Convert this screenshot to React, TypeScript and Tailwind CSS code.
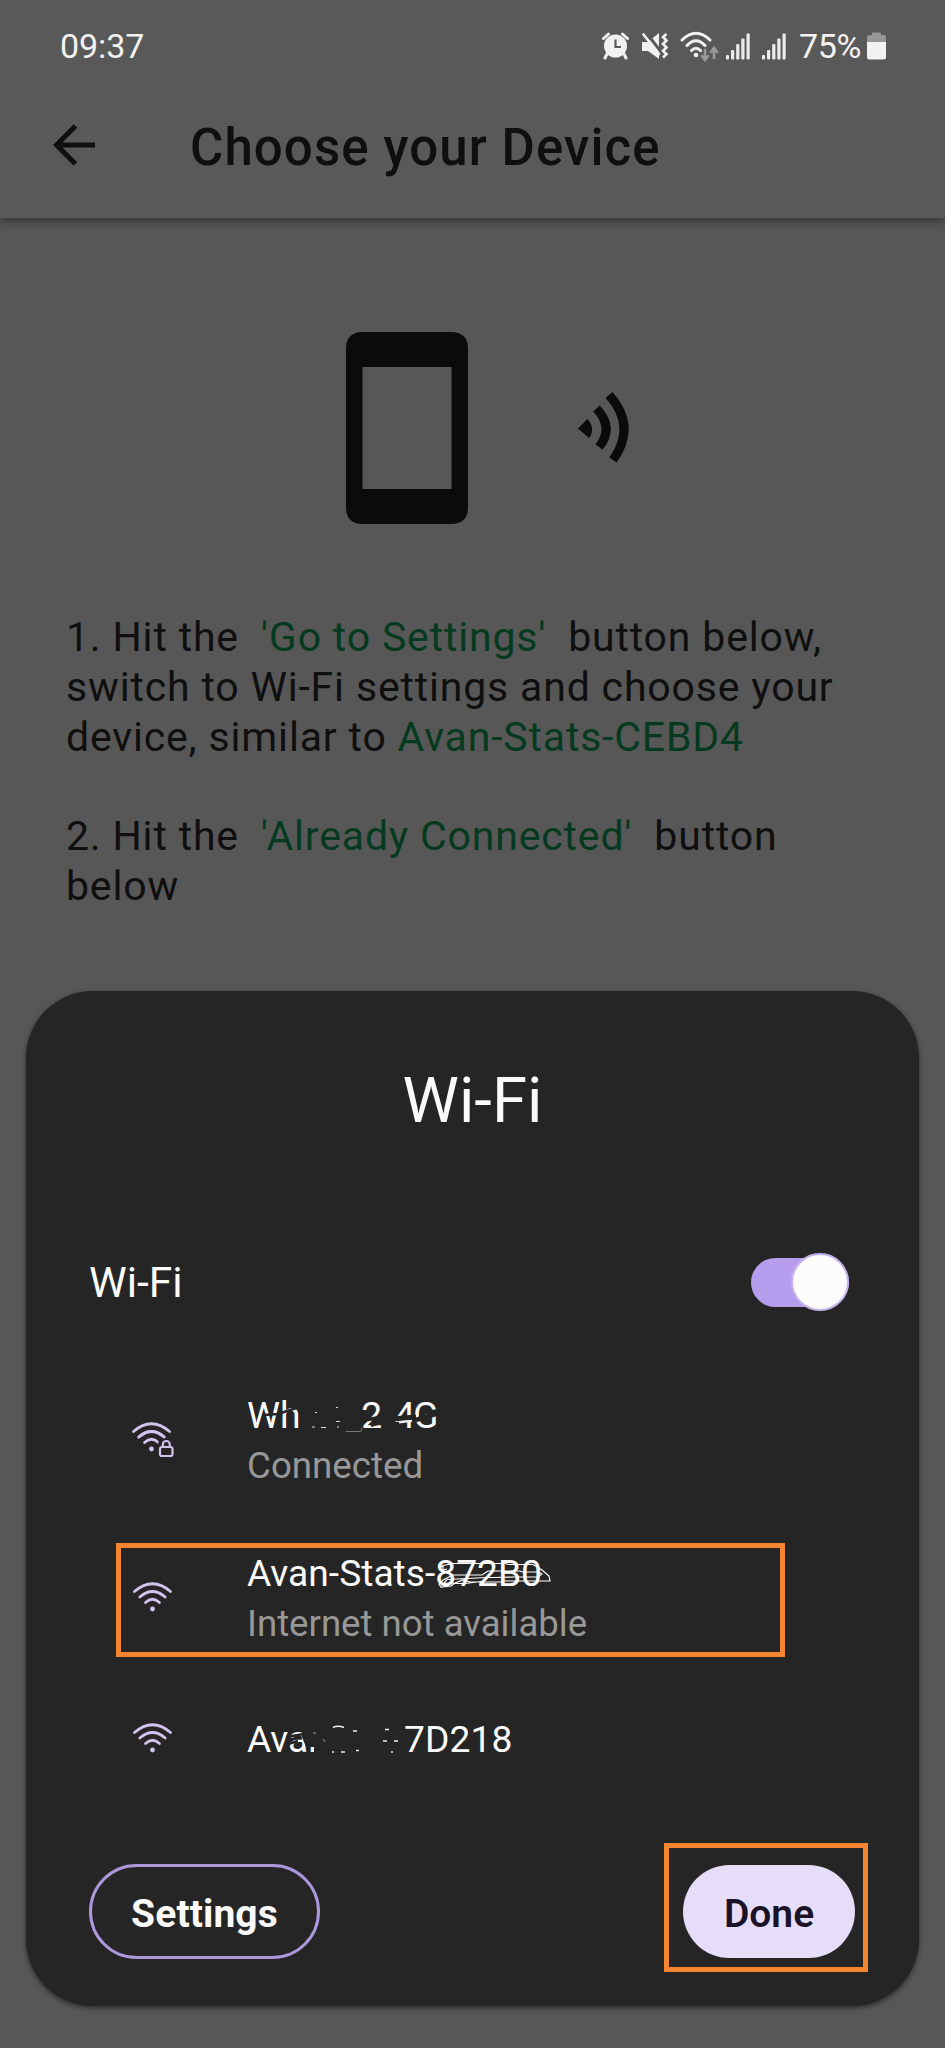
import React from "react";

function WifiIcon({ locked = false }: { locked?: boolean }) {
  return (
    <svg className="h-[40px] w-[44px] shrink-0" viewBox="0 0 44 40" fill="none" stroke="#d3c3ef" strokeWidth="2.7" strokeLinecap="round">
      <path d="M2.5 10.5Q20.5-5 38.500 10.500" />
      <path d="M7.800 16Q20.500 5 33.200 16" />
      <path d="M13.500 21.500Q20.500 15 27.500 21.500" />
      <circle cx="20.500" cy="28" r="2.400" fill="#d3c3ef" stroke="none" />
      {locked && (
        <g>
          <path d="M35 17V36" stroke="#252525" strokeWidth="15" strokeLinecap="butt" />
          <path d="M7.800 16Q20.500 5 33.200 16" />
          <rect x="29" y="26" width="12.500" height="9" rx="2" fill="#252525" strokeWidth="2.200" />
          <path d="M31.800 25.500V23.500a3.500 3.500 0 0 1 7 0V25.500" strokeWidth="2.200" />
        </g>
      )}
    </svg>
  );
}

function Bars() {
  return (
    <svg className="h-[27px] w-[25px]" viewBox="0 0 25 27" fill="#ebebeb">
      <rect x="0" y="22" width="3" height="4.500" rx="1" />
      <rect x="5" y="17" width="3.200" height="9.500" rx="1" />
      <rect x="10.200" y="11" width="3.200" height="15.500" rx="1" />
      <rect x="15.300" y="5.500" width="3.200" height="21" rx="1" />
      <rect x="20.500" y="0.500" width="3.200" height="26" rx="1" />
    </svg>
  );
}

export default function App() {
  return (
    <div className="flex h-[2048px] w-[945px] flex-col overflow-hidden bg-[#575757] font-[Roboto,sans-serif] text-[#0f0f0f]">
      <header className="h-[218px] shrink-0 bg-[#595959] shadow-[0_3px_10px_rgba(0,0,0,0.45)]">
        <div className="flex h-[92px] items-center pl-[60px] text-[34px] text-[#f2f2f2]">
          <span className="w-[542px] tracking-[-0.1px]">09:37</span>
          <svg className="h-[28px] w-[27px]" viewBox="0 0 27 28" fill="#f0f0f0">
            <circle cx="13.500" cy="14" r="11.500" />
            <path d="M13.500 7.500V15H19" fill="none" stroke="#595959" strokeWidth="2.200" />
            <path d="M1.500 6.500L6.500 2M25.500 6.500L20.500 2M5 22L3 26M22 22L24 26" stroke="#f0f0f0" strokeWidth="3" strokeLinecap="round" />
          </svg>
          <svg className="ml-[12px] h-[28px] w-[28px]" viewBox="0 0 28 28">
            <path d="M1 10H7L18 1V27L7 19H1Z" fill="#f0f0f0" />
            <path d="M4 -1L20 20" stroke="#595959" strokeWidth="3" />
            <path d="M2.500 2.500L18 22" stroke="#f0f0f0" strokeWidth="2.600" strokeLinecap="round" />
            <path d="M25.500 2L22 5L25.500 8.500L22 12L25.500 15.500L22 19L25.500 22L22 25.500" stroke="#f0f0f0" strokeWidth="2.600" fill="none" />
          </svg>
          <svg className="ml-[11px] h-[32px] w-[40px]" viewBox="0 0 40 32" fill="none" stroke="#f0f0f0" strokeWidth="3" strokeLinecap="round">
            <path d="M2 10Q16-3.500 30 10M7 15.500Q16 6 25 15.500M11.500 20.500Q16 16 20.500 20.500" />
            <circle cx="16" cy="25" r="2.300" fill="#f0f0f0" stroke="none" />
            <path d="M25 20V29M22 26L25 30L28 26M34 28V19M31 22L34 18L37 22" stroke="#999" strokeWidth="2.600" />
          </svg>
          <div className="ml-[6px] flex gap-[11px]"><Bars /><Bars /></div>
          <span className="ml-[12px] w-[64px] whitespace-nowrap tracking-[-0.4px]">75%</span>
          <svg className="ml-[4px] h-[28px] w-[19px]" viewBox="0 0 19 28">
            <path d="M5 3V1.500Q5 .5 6 .5H13Q14 .5 14 1.500V3H17Q19 3 19 5V11H0V5Q0 3 2 3Z" fill="#969696" />
            <path d="M0 10H19V25Q19 27.500 16.500 27.500H2.500Q0 27.500 0 25Z" fill="#f2f2f2" />
          </svg>
        </div>
        <div className="flex h-[108px] items-center pl-[52px]">
          <svg className="mb-[3px] h-[44px] w-[44px]" viewBox="0 0 44 44" fill="none" stroke="#0f0f0f" strokeWidth="5">
            <path d="M23.500 3L4.500 22L23.500 41M4.500 22H43" />
          </svg>
          <h1 className="ml-[94px] pt-[3px] text-[51px] font-medium leading-[60px] tracking-[1.1px]">Choose your Device</h1>
        </div>
      </header>

      <main className="h-[773px] shrink-0 pt-[114px]">
        <div className="flex h-[192px] items-center pl-[346px]">
          <svg className="h-[192px] w-[122px]" viewBox="0 0 122 192">
            <path fill="#0b0b0b" fillRule="evenodd" d="M17 0H105Q122 0 122 17V175Q122 192 105 192H17Q0 192 0 175V17Q0 0 17 0ZM16.500 35V157H105.500V35Z" />
          </svg>
          <svg className="ml-[110px] h-[72px] w-[52px]" viewBox="0 0 52 72" fill="none" stroke="#0b0b0b" strokeWidth="9">
            <path d="M0 36.500L9.500 27Q18 37 11 46Z" fill="#0b0b0b" stroke="none" />
            <path d="M18.500 16.500Q36.500 36 21 55" />
            <path d="M31 3Q59 34 35 68" />
          </svg>
        </div>
        <div className="ml-[66px] mt-[89px] whitespace-pre text-[41px] leading-[49.800px] tracking-[0.83px]">
          <p>1. Hit the <span className="text-[#063a20]"> 'Go to Settings' </span> button below,{"\n"}switch to Wi-Fi settings and choose your{"\n"}device, similar to <span className="text-[#063a20]">Avan-Stats-CEBD4</span></p>
          <p className="mt-[50px]">2. Hit the <span className="text-[#063a20]"> 'Already Connected' </span> button{"\n"}below</p>
        </div>
      </main>

      <section className="mx-[26px] flex h-[1015px] shrink-0 flex-col rounded-[67px] bg-[#252525] text-[#fafafa] shadow-[0_2px_5px_rgba(0,0,0,0.5)]">
        <h2 className="pt-[72px] text-center text-[63.500px] leading-[76px]">Wi-Fi</h2>
        <div className="mt-[101px] flex h-[84px] items-center pl-[63px]">
          <span className="w-[662px] pt-[2px] text-[42.500px]">Wi-Fi</span>
          <div className="flex h-[49px] w-[98px] items-center justify-end rounded-full bg-[#b69ded]">
            <div className="h-[58px] w-[58px] shrink-0 rounded-full border-[2px] border-[#c4b3ea] bg-[#fcfcfc]" />
          </div>
        </div>

        <div className="mt-[67px] flex h-[110px] pl-[105px] text-[37.200px] leading-[50px]">
          <div className="w-[116px] pt-[30px]"><WifiIcon locked /></div>
          <div>
            <div className="relative -mt-px mb-px w-[210px] whitespace-nowrap">
              Wh<span className="ml-[44px]">_</span><span>2</span><span className="ml-[12px] tracking-[-2px]">4G</span>
              <svg className="absolute -left-[7px] top-0 h-[50px] w-[210px]" viewBox="0 0 210 50" fill="none" stroke="#252525">
                <path d="M24 25L38 24L58 17.500" strokeWidth="2.600" />
                <path d="M48 12L60 12V17L50 18Z" fill="#252525" stroke="none" />
                <path d="M102 37.500H121V44H102Z" fill="#252525" stroke="none" />
                <path d="M120 31L142 27" strokeWidth="3.500" />
                <path d="M131 36L142 33" strokeWidth="2" />
                <path d="M152 29L176 27" strokeWidth="5" />
                <path d="M152 35L164 33" strokeWidth="2" />
                <path d="M172 31L186 27L199 23" strokeWidth="4.500" />
                <path d="M106 41.500H121" stroke="#777" strokeWidth="1" />
                <path d="M75 22.500H77M96 17.500H98M72 37H75M81 37.500H86M96 31.500H100M97 37H99" stroke="#ddd" strokeWidth="1.200" />
                <path d="M159 32.500L171 31" stroke="#eee" strokeWidth="1.800" />
              </svg>
            </div>
            <div className="text-[36.700px] text-[#989898]">Connected</div>
          </div>
        </div>

        <div className="ml-[90px] mt-[42px] flex h-[114px] w-[669px] border-[5px] border-[#f68532] pl-[11px] text-[37.200px] leading-[50px]">
          <div className="w-[115px] pt-[33px]"><WifiIcon /></div>
          <div>
            <div className="relative w-[310px] whitespace-nowrap">
              Avan-Stats-872B0
              <svg className="absolute left-[178px] top-[2px] h-[45px] w-[140px]" viewBox="0 0 140 45" fill="none" stroke="#fff" strokeWidth="1.200">
                <path d="M14 18L18 15.500L28 13.500H80L84 14.500H108L117 20L124 26L125 31H78L76 32H45L38 30L30 33L26 36L16 37L14 34L18 30L26 26V25H57L63 21H95L97 22H114L117 24L113 27H90L70 27.500H62L22 29.500L19 33L40 33.500L60 31M18 16V20L22 19" />
              </svg>
            </div>
            <div className="pt-px text-[36.600px] text-[#989898]">Internet not available</div>
          </div>
        </div>

        <div className="mt-[57px] flex h-[50px] pl-[106px] text-[37.200px] leading-[50px]">
          <div className="w-[115px] pt-[8px]"><WifiIcon /></div>
          <div className="relative flex w-[280px] whitespace-nowrap">
            <span className="w-[157px]">Avan</span>
            <span className="tracking-[0.1px]">7D218</span>
            <svg className="absolute -left-[7px] top-[1px] h-[45px] w-[180px]" viewBox="0 0 180 45" fill="none" stroke="#252525">
              <path d="M62 8H160V42H74V32H66L62 22Z" fill="#252525" stroke="none" />
              <path d="M46 22L64 19M48 29L58 26" strokeWidth="2.600" />
              <path d="M93 12.500Q98 10 104 12.500" stroke="#eee" strokeWidth="1.500" />
              <path d="M113 16H117M145 14.500H149M116 35.500H119M101 37H105M143 26H147M154 26H158M151 37H153M92 37H94" stroke="#eee" strokeWidth="1.500" />
              <path d="M73 18H76M83 24L85 27" stroke="#999" strokeWidth="1" />
            </svg>
          </div>
        </div>

        <div className="mt-[79px] flex h-[129px] items-center justify-between pl-[63px] pr-[51px] text-[39px]">
          <button className="mt-[8px] h-[95px] w-[231px] rounded-full border-[3px] border-[#ad98dc] pt-[6px] font-bold tracking-[0.1px]">Settings</button>
          <div className="flex h-[129px] w-[204px] items-center justify-center border-[5px] border-[#f68532] pl-[6px] pt-[7px]">
            <button className="h-[93px] w-[172px] shrink-0 rounded-full bg-[#e6def8] pt-[6px] font-semibold text-[#1b1228]">Done</button>
          </div>
        </div>
      </section>
    </div>
  );
}
